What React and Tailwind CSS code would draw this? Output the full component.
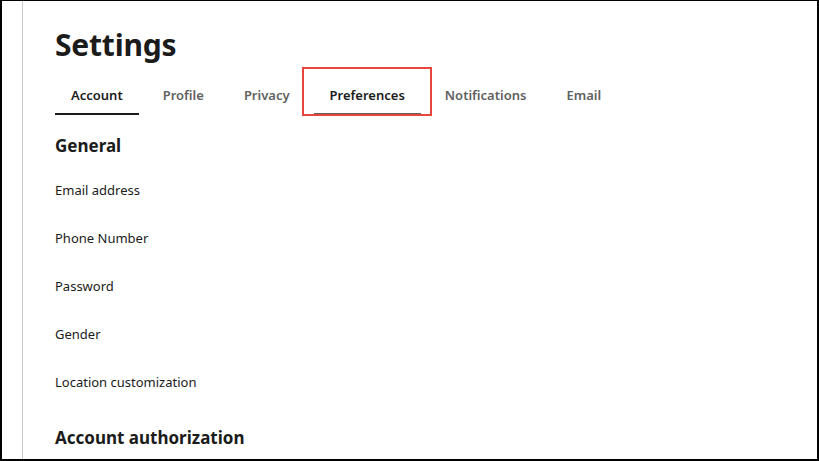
import React from 'react'

const TABS = ['Account', 'Profile', 'Privacy', 'Preferences', 'Notifications', 'Email']

const GENERAL = ['Email address', 'Phone Number', 'Password', 'Gender', 'Location customization']

export default function App() {
  return (
    <div
      className="w-[819px] h-[461px] overflow-hidden bg-white border-l-2 border-t border-r-2 border-b-2 border-black flex text-[#1b1b1b]"
      style={{ fontFamily: '"Segoe UI", "Noto Sans", sans-serif' }}
    >
      {/* left rail */}
      <div className="w-[21px] shrink-0 border-r border-[#c8c8c8]" />

      <div className="flex-1 pl-8 pt-[22px]">
        <h1 className="text-[30px] font-bold leading-[44px] tracking-[-0.2px]">Settings</h1>

        {/* tabs */}
        <div className="flex gap-2 mt-[10px]">
          {TABS.map((t, i) => (
            <div key={t} className="relative">
              <div
                className={`px-4 pt-[2px] h-[38px] flex items-center text-[13px] font-semibold ${
                  i === 0 ? 'text-[#1b1b1b] border-b-2 border-[#1b1b1b]' : i === 3 ? 'text-[#1b1b1b] border-b-2 border-[#616161]' : 'text-[#616161] border-b-2 border-transparent'
                }`}
              >
                {t}
              </div>
              {i === 3 && (
                <div className="absolute -left-[12px] -right-[11px] -top-[10px] -bottom-[1px] border-2 border-[#e8453c] pointer-events-none" />
              )}
            </div>
          ))}
        </div>

        <h2 className="text-[17px] font-bold mt-[19px] leading-6">General</h2>

        <div className="mt-[9px] flex flex-col">
          {GENERAL.map((g) => (
            <div key={g} className="h-12 flex items-center text-[13px]">
              {g}
            </div>
          ))}
        </div>

        <h2 className="text-[17px] font-bold mt-[19px] leading-6">Account authorization</h2>
      </div>
    </div>
  )
}
